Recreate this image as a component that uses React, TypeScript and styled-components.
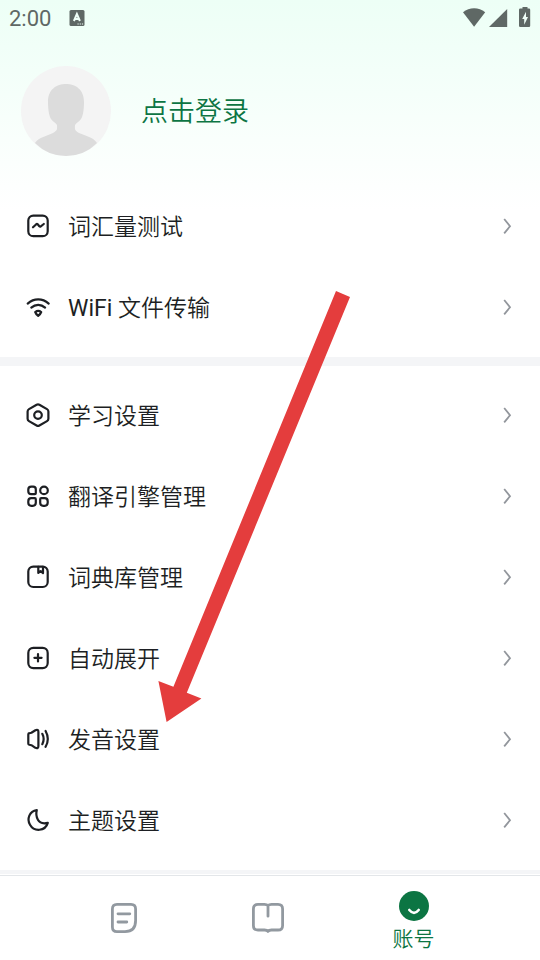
import React from "react";
import styled, { createGlobalStyle } from "styled-components";

const GlobalStyle = createGlobalStyle`
  * { box-sizing: border-box; }
  body {
    margin: 0;
    background: #fff;
    font-family: Roboto, "Noto Sans CJK SC", sans-serif;
    color: #1d1f23;
  }
  button {
    border: 0;
    padding: 0;
    margin: 0;
    background: none;
    font: inherit;
    color: inherit;
    text-align: left;
    cursor: pointer;
  }
  svg { display: block; flex: none; }
`;

const Screen = styled.div`
  position: relative;
  display: flex;
  flex-direction: column;
  height: 100vh;
  overflow: hidden;
  background: linear-gradient(#edfff6 0, #fff 210px);
`;

const StatusBar = styled.header`
  display: flex;
  flex: none;
  align-items: center;
  height: 36px;
  padding: 0 9px;
  color: #5f6865;
`;

const Clock = styled.time`
  font-size: 22px;
  line-height: 36px;
  margin-right: 18px;
  padding-top: 1px;
`;

const StatusIcons = styled.div`
  display: flex;
  align-items: center;
  margin-left: auto;
`;

const Content = styled.main`
  flex: 1;
  min-height: 0;
  overflow-y: auto;
  scrollbar-width: none;
`;

const Profile = styled.button`
  display: flex;
  align-items: center;
  width: 100%;
  gap: 30px;
  padding: 30px 21px;
  color: #0c7543;
`;

const ProfileLabel = styled.span`
  padding-top: 2px;
  font-size: 27px;
  line-height: 36px;
  font-weight: 350;
`;

const Group = styled.ul`
  list-style: none;
  margin: 0;
  padding: 0 0 9px;
  border-bottom: 9px solid #f4f5f7;

  & + & {
    padding-top: 9px;
  }
`;

const Row = styled.button`
  display: flex;
  align-items: center;
  width: 100%;
  height: 81px;
  padding: 0 28px 0 26px;
`;

const RowLabel = styled.span`
  flex: 1;
  padding: 2px 0 0 17px;
  font-size: 23px;
  line-height: 32px;
  font-weight: 350;
`;

const Latin = styled.span`
  font-weight: 400;
`;

const TabBar = styled.nav`
  flex: none;
  padding-top: 1px;
  background: #fff;
`;

const Tabs = styled.div`
  display: grid;
  grid-template-columns: repeat(3, 1fr);
  height: 85px;
  padding: 0 54px 0 51px;
  border-top: 1px solid #e3e6e9;
`;

const Tab = styled.button<{ $active?: boolean }>`
  display: flex;
  flex-direction: column;
  align-items: center;
  justify-content: center;
  padding-top: ${(p) => (p.$active ? "6px" : "0")};
  color: ${(p) => (p.$active ? "#0c7543" : "#9299a0")};
`;

const TabLabel = styled.span`
  padding-top: 6px;
  font-size: 21px;
  line-height: 24px;
  font-weight: 350;
`;

const Pointer = styled.svg`
  position: absolute;
  left: 158px;
  top: 291px;
  pointer-events: none;
`;

const icons: Record<string, React.ReactNode> = {
  test: (
    <>
      <rect x="2.3" y="1.6" width="19.4" height="20.6" rx="5" />
      <path d="M7 13.3 10.3 10.2Q11 9.6 11.7 10.3L13.3 12.2Q14 12.9 14.8 12.3L17.8 10" />
    </>
  ),
  wifi: (
    <>
      <path d="M1.7 8.6Q6.4 4.4 12.2 4.4T22.7 8.6" />
      <path d="M5.3 12.6Q8.4 9.8 12.2 9.8T19.1 12.6" />
      <path d="M9.2 17Q12.2 14.6 15.2 17Q14.4 19.2 12.2 20.8Q10 19.2 9.2 17Z" />
    </>
  ),
  study: (
    <>
      <path d="M10.6 1.7Q12 .9 13.4 1.7L21 6.1Q22.4 6.9 22.4 8.5V15.7Q22.4 17.3 21 18.1L13.4 22.5Q12 23.3 10.6 22.5L3 18.1Q1.6 17.3 1.6 15.7V8.5Q1.6 6.9 3 6.1Z" />
      <circle cx="12" cy="12.1" r="3.8" />
    </>
  ),
  engine: (
    <>
      <path d="M5.3 2.6H7.2Q9.8 2.6 9.8 5.2V9.2Q9.8 10.2 8.8 10.2H5.3Q2.3 10.2 2.3 7.2V5.6Q2.3 2.6 5.3 2.6Z" />
      <circle cx="18" cy="6.4" r="3.8" />
      <path d="M5.3 14.2H8.8Q9.8 14.2 9.8 15.2V18.8Q9.8 21.8 6.8 21.8H5.3Q2.3 21.8 2.3 18.8V17.2Q2.3 14.2 5.3 14.2Z" />
      <path d="M15.2 14.2H18.6Q21.7 14.2 21.7 17.2V18.8Q21.7 21.8 18.7 21.8H17.2Q14.2 21.8 14.2 18.8V15.2Q14.2 14.2 15.2 14.2Z" />
    </>
  ),
  library: (
    <>
      <rect x="2.3" y="1.6" width="19.4" height="20.4" rx="5" />
      <path d="M12.3 1.8V8L14.6 6.2L17 8V1.8" />
    </>
  ),
  expand: (
    <>
      <rect x="2.3" y="1.9" width="19.4" height="20.2" rx="5" />
      <path d="M12 8.2V15.4M8.4 11.8H15.6" />
    </>
  ),
  sound: (
    <>
      <path d="M2.3 7.5Q2.3 6.4 3.3 6.2L5.4 5.7L9.4 3.2Q12.4 2 12.4 5V19Q12.4 22 9.4 20.8L5.4 18.2L3.3 17.7Q2.3 17.4 2.3 16.4Z" />
      <path d="M16.3 6.8Q19 12 16.3 17.2M19.6 4Q24 12 19.6 19.8" />
    </>
  ),
  theme: (
    <path d="M10.8 2.1C3.4 3.1.6 11 4 16.7C8 23.9 19.2 23.6 21.8 14.9Q14.6 16.6 11.9 11.8Q9.5 7.5 10.8 2.1Z" />
  ),
};

const groups: { icon: string; label: React.ReactNode }[][] = [
  [
    { icon: "test", label: "词汇量测试" },
    { icon: "wifi", label: <><Latin>WiFi </Latin>文件传输</> },
  ],
  [
    { icon: "study", label: "学习设置" },
    { icon: "engine", label: "翻译引擎管理" },
    { icon: "library", label: "词典库管理" },
    { icon: "expand", label: "自动展开" },
    { icon: "sound", label: "发音设置" },
    { icon: "theme", label: "主题设置" },
  ],
];

function LineIcon({ name }: { name: string }) {
  return (
    <svg width="25" height="25" viewBox="0 0 25 25" fill="none" stroke="currentColor" strokeWidth="2.2" strokeLinecap="round" strokeLinejoin="round" aria-hidden="true">
      {icons[name]}
    </svg>
  );
}

function Chevron() {
  return (
    <svg width="9" height="17" viewBox="0 0 9 17" fill="none" stroke="#92969c" strokeWidth="1.8" aria-hidden="true">
      <path d="M1.2 1 7 8.2 1.2 15.4" />
    </svg>
  );
}

function Avatar() {
  return (
    <svg width="90" height="90" viewBox="0 0 90 90" aria-hidden="true">
      <circle cx="45" cy="45" r="45" fill="#f4f4f4" />
      <path
        fill="#dcdcdc"
        d="M45 18C54 18 63 23 63 36C63 43 62 50 60 53C58 56 56 56 54 59C54 63 53 64 58 67C65 70 72 71 76 77Q63 90 45 90T14 77C18 71 26 70 32 67C37 64 36 63 36 59C34 56 32 56 30 53C28 50 27 43 27 36C27 23 36 18 45 18Z"
      />
    </svg>
  );
}

export default function App() {
  return (
    <>
      <GlobalStyle />
      <Screen>
        <StatusBar>
          <Clock>2:00</Clock>
          <svg width="16" height="16" viewBox="0 0 16 16" aria-hidden="true">
            <rect x=".5" y="0" width="15" height="16" rx="1.5" fill="currentColor" />
            <path d="M4.9 11 7.9 4 10.9 11M5.9 9H9.9" fill="none" stroke="#f0fff8" strokeWidth="2" />
            <path d="M8.5 14H14.5" stroke="#f0fff8" strokeWidth="1.2" strokeDasharray="1.2 1" />
          </svg>
          <StatusIcons>
            <svg width="68" height="22" viewBox="0 0 68 22" fill="currentColor" aria-hidden="true">
              <path d="M0 5.2Q5 1.2 11.1 1.2T22.2 5.2L11.1 19.7Z" />
              <path d="M26 20 44.2 2V20Z" />
              <path d="M59.5 0H64.5V1.6H66Q67.2 1.6 67.2 2.8V18.8Q67.2 20 66 20H57.2Q56 20 56 18.8V2.8Q56 1.6 57.2 1.6H59.5Z" />
              <path d="M63 4.8 59.2 12H61.2V17.8L65 10H63Z" fill="#f0fff8" />
            </svg>
          </StatusIcons>
        </StatusBar>
        <Content>
          <Profile type="button">
            <Avatar />
            <ProfileLabel>点击登录</ProfileLabel>
          </Profile>
          {groups.map((rows, i) => (
            <Group key={i}>
              {rows.map((row) => (
                <li key={row.icon}>
                  <Row type="button">
                    <LineIcon name={row.icon} />
                    <RowLabel>{row.label}</RowLabel>
                    <Chevron />
                  </Row>
                </li>
              ))}
            </Group>
          ))}
        </Content>
        <TabBar>
          <Tabs>
            <Tab type="button" aria-label="文章">
              <svg width="26" height="30" viewBox="0 0 26 30" fill="none" stroke="currentColor" strokeWidth="2.8" strokeLinecap="round" strokeLinejoin="round" aria-hidden="true">
                <path d="M6 1.4H20Q24.6 1.4 24.6 6V17.5Q24.6 28.6 14 28.6H6Q1.4 28.6 1.4 24V6Q1.4 1.4 6 1.4Z" />
                <path d="M7 10.8H18.8M7 19H15.8" />
              </svg>
            </Tab>
            <Tab type="button" aria-label="词典">
              <svg width="33" height="30" viewBox="0 0 33 30" fill="none" stroke="currentColor" strokeWidth="2.8" strokeLinecap="round" strokeLinejoin="round" aria-hidden="true">
                <path d="M16 2.6Q14.8 1.4 12.5 1.4H6Q1.4 1.4 1.4 6V22.4Q1.4 27 6 27H12.5Q15 27 16 28.4Q17 27 19.5 27H26Q30.6 27 30.6 22.4V6Q30.6 1.4 26 1.4H19.5Q17.2 1.4 16 2.6V13.2" />
              </svg>
            </Tab>
            <Tab type="button" $active aria-current="page">
              <svg width="30" height="30" viewBox="0 0 30 30" aria-hidden="true">
                <circle cx="15" cy="15" r="15" fill="currentColor" />
                <path d="M10.3 19Q15 24.8 19.7 19" fill="none" stroke="#fff" strokeWidth="2.6" strokeLinecap="round" />
              </svg>
              <TabLabel>账号</TabLabel>
            </Tab>
          </Tabs>
        </TabBar>
        <Pointer width="193" height="432" viewBox="0 0 193 432" aria-hidden="true">
          <path d="M178 0 192 6 28.8 401.7 43.4 407.5 8.6 431 .4 390 15.4 395.8Z" fill="#e43d3d" />
        </Pointer>
      </Screen>
    </>
  );
}
